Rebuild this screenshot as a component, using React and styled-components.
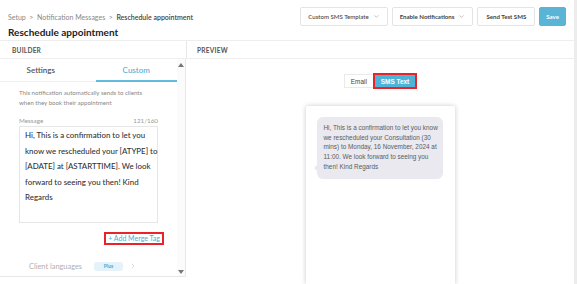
import React from "react";
import styled, {createGlobalStyle} from "styled-components";
import {ChevronDown, ChevronRight} from "lucide-react";

const GlobalStyle = createGlobalStyle`
  body {
    margin: 0;
    background: #fff;
    font-family: Lato, "Open Sans", sans-serif;
    color: #333;
  }
  * { box-sizing: border-box; }
`;

const Page = styled.div`
  width: 577px;
  height: 284px;
  overflow: hidden;
  border-right: 3px solid #ececec;
  display: flex;
  flex-direction: column;
`;

const Header = styled.header`
  height: 40px;
  display: flex;
  justify-content: space-between;
  align-items: flex-start;
  padding: 0 8px;
`;

const TitleBlock = styled.div`
  padding-top: 12px;
`;

const Crumbs = styled.div`
  font-size: 7px;
  line-height: 10px;
  color: #888;

  b {
    font-weight: 600;
    color: #444;
  }
`;

const Title = styled.h1`
  margin: 3px 0 0;
  font-size: 10px;
  line-height: 14px;
  font-weight: 700;
  color: #222;
`;

const Actions = styled.div`
  display: flex;
  gap: 4px;
  padding-top: 7px;
`;

const Button = styled.button`
  height: 19px;
  padding: 0 ${(p) => p.pad || 7}px;
  border: 1px solid ${(p) => (p.primary ? "#5ab4d6" : "#e4e4e4")};
  border-radius: 2px;
  background: ${(p) => (p.primary ? "#5ab4d6" : "#fff")};
  color: ${(p) => (p.primary ? "#fff" : "#444")};
  font-family: inherit;
  font-size: 6.1px;
  font-weight: ${(p) => p.weight || 700};
  display: flex;
  align-items: center;
  gap: 4px;

  svg {
    color: #999;
  }
`;

const Sections = styled.div`
  display: grid;
  grid-template-columns: 186px 1fr;
  height: 19px;
  border-top: 1px solid #eee;
  border-bottom: 1px solid #eee;
`;

const SectionLabel = styled.div`
  display: flex;
  align-items: center;
  padding-left: ${(p) => p.indent || 12}px;
  font-size: 6.6px;
  font-weight: 700;
  letter-spacing: 0.2px;
  color: #555;
  border-left: ${(p) => (p.divided ? "1px solid #e8e8e8" : "none")};
`;

const Body = styled.div`
  flex: 1;
  display: grid;
  grid-template-columns: 186px 1fr;
  min-height: 0;
`;

const Builder = styled.div`
  display: flex;
  height: 218px;
  border-right: 1px solid #e8e8e8;
  border-bottom: 1px solid #e8e8e8;
`;

const BuilderContent = styled.div`
  width: 177px;
`;

const Tabs = styled.div`
  display: grid;
  grid-template-columns: 1fr 1fr;
  column-gap: 14px;
  height: 23px;
  border-bottom: 1px solid #eee;
`;

const Tab = styled.div`
  display: flex;
  align-items: center;
  justify-content: center;
  font-size: 8px;
  font-weight: ${(p) => (p.active ? 500 : 600)};
  color: ${(p) => (p.active ? "#4badd3" : "#555")};
  border-bottom: 2px solid ${(p) => (p.active ? "#62bbdc" : "transparent")};
  margin-bottom: -1px;
`;

const Form = styled.div`
  padding: 6px 19px 0;
`;

const Note = styled.p`
  margin: 0;
  font-size: 6.1px;
  line-height: 10px;
  color: #888;
`;

const FieldHead = styled.div`
  display: flex;
  justify-content: space-between;
  margin-top: 8px;
  font-size: 6.3px;
  line-height: 10px;
  color: #999;
`;

const MessageBox = styled.div`
  height: 97px;
  border: 1px solid #e6e6e6;
  padding: 1px 5px;
  font-size: 7.9px;
  line-height: 15.6px;
  font-weight: 500;
  color: #333;
  white-space: nowrap;
`;

const MergeRow = styled.div`
  display: flex;
  justify-content: flex-end;
  margin: 10px -5px 0 0;
`;

const MergeLink = styled.a`
  font-size: 7px;
  line-height: 9px;
  padding: 1px 3px;
  color: #4badd3;
  outline: 2px solid #e8242a;
  outline-offset: -1px;
`;

const LangRow = styled.div`
  display: flex;
  align-items: center;
  margin-top: 16px;
  padding-left: 10px;
  height: 12px;
  font-size: 7.4px;
  color: #b0b0b0;

  svg {
    color: #c8c8c8;
    margin-left: 6px;
  }
`;

const Badge = styled.span`
  margin-left: 12px;
  width: 29px;
  height: 9px;
  border-radius: 3px;
  background: #e4f3fa;
  color: #4aa8cf;
  font-size: 5px;
  font-weight: 700;
  display: flex;
  align-items: center;
  justify-content: center;
`;

const Scrollbar = styled.div`
  width: 9px;
  display: flex;
  flex-direction: column;
  justify-content: space-between;
  align-items: center;
  padding: 4px 0 2px;
  background: #fbfbfb;
`;

const Arrow = styled.span`
  width: 0;
  height: 0;
  border-left: 3px solid transparent;
  border-right: 3px solid transparent;
  ${(p) => (p.down ? "border-top" : "border-bottom")}: 4px solid #777;
`;

const Preview = styled.div`
  display: flex;
  flex-direction: column;
  align-items: center;
  min-height: 0;
`;

const Toggle = styled.div`
  display: flex;
  margin-top: 15px;
  height: 14px;
`;

const ToggleItem = styled.div`
  display: flex;
  align-items: center;
  padding: 0 6px;
  font-family: "Liberation Sans", Arial, sans-serif;
  font-size: 6.4px;
  font-weight: ${(p) => (p.active ? 700 : 400)};
  color: ${(p) => (p.active ? "#fff" : "#444")};
  background: ${(p) => (p.active ? "#4fb3d8" : "#fff")};
  border: 1px solid ${(p) => (p.active ? "#e8242a" : "#eaeaea")};
  outline: ${(p) => (p.active ? "1px solid #e8242a" : "none")};
`;

const Phone = styled.div`
  margin-top: 18px;
  width: 149px;
  flex: 1;
  background: #fff;
  border-radius: 2px 2px 0 0;
  box-shadow: 0 0 5px rgba(0, 0, 0, 0.22);
  padding: 11px 12px 0 11px;
`;

const Bubble = styled.div`
  position: relative;
  background: #e9e9ef;
  border-radius: 6px;
  padding: 6px 7px 7px;
  font-family: "Liberation Sans", Arial, sans-serif;
  font-size: 6.4px;
  line-height: 9.7px;
  color: #5c5c5c;
  white-space: nowrap;

  &::before {
    content: "";
    position: absolute;
    left: -3px;
    bottom: 8px;
    border-top: 3px solid transparent;
    border-bottom: 3px solid transparent;
    border-right: 3px solid #e9e9ef;
  }
`;

export default function App() {
  return (
    <>
      <GlobalStyle />
      <Page>
        <Header>
          <TitleBlock>
            <Crumbs>
              Setup &nbsp;&gt;&nbsp; Notification Messages &nbsp;&gt;&nbsp; <b>Reschedule appointment</b>
            </Crumbs>
            <Title>Reschedule appointment</Title>
          </TitleBlock>
          <Actions>
            <Button weight={500}>
              Custom SMS Template <ChevronDown size={7} />
            </Button>
            <Button>
              Enable Notifications <ChevronDown size={7} />
            </Button>
            <Button pad={8}>Send Test SMS</Button>
            <Button primary pad={6}>Save</Button>
          </Actions>
        </Header>

        <Sections>
          <SectionLabel>BUILDER</SectionLabel>
          <SectionLabel divided indent={10}>PREVIEW</SectionLabel>
        </Sections>

        <Body>
          <Builder>
            <BuilderContent>
              <Tabs>
                <Tab>Settings</Tab>
                <Tab active>Custom</Tab>
              </Tabs>
              <Form>
                <Note>
                  This notification automatically sends to clients<br />
                  when they book their appointment
                </Note>
                <FieldHead>
                  <span>Message</span>
                  <span>121/160</span>
                </FieldHead>
                <MessageBox>
                  Hi, This is a confirmation to let you<br />
                  know we rescheduled your [ATYPE] to<br />
                  [ADATE] at [ASTARTTIME]. We look<br />
                  forward to seeing you then! Kind<br />
                  Regards
                </MessageBox>
                <MergeRow>
                  <MergeLink>+ Add Merge Tag</MergeLink>
                </MergeRow>
                <LangRow>
                  Client languages
                  <Badge>Plus</Badge>
                  <ChevronRight size={8} />
                </LangRow>
              </Form>
            </BuilderContent>
            <Scrollbar>
              <Arrow />
              <Arrow down />
            </Scrollbar>
          </Builder>

          <Preview>
            <Toggle>
              <ToggleItem>Email</ToggleItem>
              <ToggleItem active>SMS Text</ToggleItem>
            </Toggle>
            <Phone>
              <Bubble>
                Hi, This is a confirmation to let you know<br />
                we rescheduled your Consultation (30<br />
                mins) to Monday, 16 November, 2024 at<br />
                11:00. We look forward to seeing you<br />
                then! Kind Regards
              </Bubble>
            </Phone>
          </Preview>
        </Body>
      </Page>
    </>
  );
}
